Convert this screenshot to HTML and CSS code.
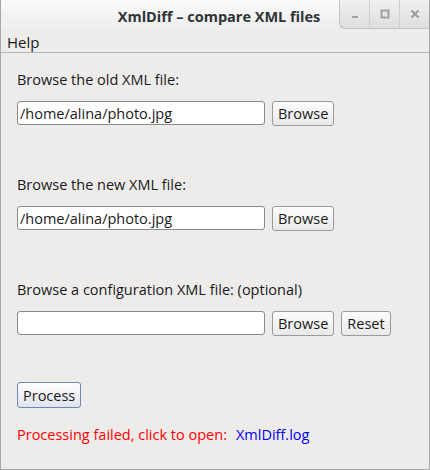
FILE: index.html
```html
<!DOCTYPE html>
<html>
<head>
<meta charset="utf-8">
<link rel="stylesheet" href="styles.css">
</head>
<body>
<div class="window">
  <div class="titlebar">
    <div class="title">XmlDiff – compare XML files</div>
    <div class="wbtns">
      <div class="wbtn"><svg width="10" height="10" viewBox="0 0 10 10"><rect x="2" y="7" width="6" height="2" fill="#a0a0a0"/></svg></div>
      <div class="wbtn"><svg width="10" height="10" viewBox="0 0 10 10"><rect x="1.5" y="1.5" width="7" height="7" fill="none" stroke="#a0a0a0" stroke-width="2"/></svg></div>
      <div class="wbtn"><svg width="10" height="10" viewBox="0 0 10 10"><path d="M1.5 1.5L8.5 8.5M8.5 1.5L1.5 8.5" stroke="#a0a0a0" stroke-width="2.2"/></svg></div>
    </div>
  </div>
  <div class="menubar"><span class="menu">Help</span></div>
  <div class="content">
    <div class="section">
      <div class="label">Browse the old XML file:</div>
      <div class="row">
        <div class="field">/home/alina/photo.jpg</div>
        <div class="btn">Browse</div>
      </div>
    </div>
    <div class="section">
      <div class="label">Browse the new XML file:</div>
      <div class="row">
        <div class="field">/home/alina/photo.jpg</div>
        <div class="btn">Browse</div>
      </div>
    </div>
    <div class="section">
      <div class="label">Browse a configuration XML file: (optional)</div>
      <div class="row">
        <div class="field"></div>
        <div class="btn">Browse</div>
        <div class="btn">Reset</div>
      </div>
    </div>
    <div class="process-row"><div class="btn process">Process</div></div>
    <div class="status"><span class="fail">Processing failed, click to open:</span><span class="link">XmlDiff.log</span></div>
  </div>
</div>
</body>
</html>
```
FILE: styles.css
```css
html, body { margin: 0; padding: 0; }
body {
  width: 430px; height: 470px; overflow: hidden;
  font-family: "Open Sans", "DejaVu Sans", sans-serif;
  font-size: 14.5px; color: #1a1a1a;
}
.window {
  width: 430px; height: 470px; box-sizing: border-box;
  border: 1px solid #a8a8a8; border-top: none;
  background: #edeceb;
  display: flex; flex-direction: column;
}
.titlebar {
  height: 32px; position: relative;
  background: linear-gradient(#fafafa, #ececec);
  display: flex; align-items: center; justify-content: center;
}
.title {
  font-weight: bold; font-size: 14.5px; color: #2e3436;
  margin-left: 8px; margin-top: 1px;
}
.wbtns {
  position: absolute; right: 0; top: 0; height: 28px;
  display: flex;
  border-left: 1px solid #c4c4c4; border-bottom: 1px solid #c4c4c4;
  border-bottom-left-radius: 6px;
  background: linear-gradient(#f0f0f0, #dedede);
  overflow: hidden;
}
.wbtn {
  width: 29px; display: flex; align-items: center; justify-content: center;
  border-left: 1px solid #cfcfcf;
}
.wbtn:first-child { border-left: none; }
.menubar {
  height: 20px; border-bottom: 1px solid #b8b8b8;
  background: #edeceb;
  display: flex; align-items: center;
}
.menu { margin-left: 6px; font-size: 15px; }
.content { padding: 12px 0 0 16px; display: flex; flex-direction: column; }
.section { height: 105px; display: flex; flex-direction: column; }
.label { height: 23px; line-height: 23px; padding-top: 3px; }
.row { display: flex; gap: 7px; margin-top: 10px; }
.field {
  width: 244px; height: 22px;
  background: #fff; border: 1px solid #8a8a8a; border-radius: 3px;
  padding-left: 2px; line-height: 23px; font-size: 14.5px; white-space: nowrap;
}
.btn {
  height: 23px; padding: 0 5px; line-height: 24px;
  border: 1px solid #9a9a9a; border-radius: 3px;
  background: linear-gradient(#fdfdfd, #e8e8e8);
  font-size: 14.5px;
}
.process-row { margin-top: 2px; display: flex; }
.process {
  height: 24px; line-height: 25px;
  border-color: #6d87b0; padding: 0 5px;
  background: linear-gradient(#ffffff, #dfe3ea);
}
.status { margin-top: 17px; line-height: 20px; }
.fail { color: #ff0000; }
.link { color: #0000ff; margin-left: 9px; }
```
